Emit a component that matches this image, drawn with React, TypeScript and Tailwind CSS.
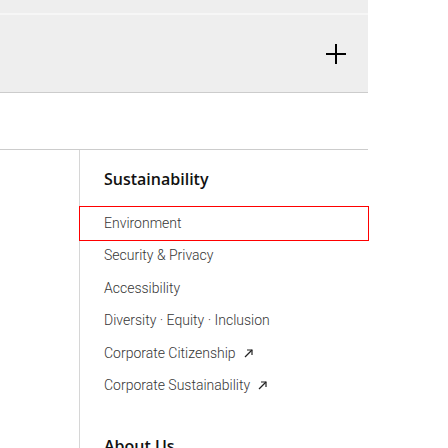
import React from "react";

type NavLink = { label: string; external?: boolean; focused?: boolean };

const links: NavLink[] = [
  { label: "Environment", focused: true },
  { label: "Security & Privacy" },
  { label: "Accessibility" },
  { label: "Diversity · Equity · Inclusion" },
  { label: "Corporate Citizenship", external: true },
  { label: "Corporate Sustainability", external: true },
];

function ArrowUpRight() {
  return (
    <svg width="9" height="9" viewBox="0 0 9 9" className="ml-2 inline-block" fill="none" stroke="#222" strokeWidth="1.2">
      <path d="M1 8 L8 1" />
      <path d="M3 1 H8 V6" />
    </svg>
  );
}

function PlusIcon() {
  return (
    <svg width="20" height="20" viewBox="0 0 20 20" stroke="#000" strokeWidth="2">
      <path d="M0 10 H20" />
      <path d="M10 0 V20" />
    </svg>
  );
}

export default function App() {
  return (
    <div className="h-[448px] w-[448px] overflow-hidden bg-white" style={{ fontFamily: "Roboto, 'Open Sans', sans-serif" }}>
      <div className="w-[368px]">
        <div className="h-[15px] border-b-2 border-[#f6f6f6] bg-[#eeeeee]" />
        <button className="flex h-[78px] w-full items-center justify-end border-b border-[#cccccc] bg-[#eeeeee] pr-[22px]">
          <PlusIcon />
        </button>

        <div className="mt-[56px] border-t border-[#cccccc] pl-[79px]">
          <div className="border-l border-[#d6d6d6] pt-[17px]">
            <h3 className="mb-[16px] pl-[24px] font-['Open_Sans',sans-serif] text-[16px] font-semibold leading-[24px] text-[#111]">Sustainability</h3>
            <ul>
              {links.map((l) => (
                <li key={l.label}>
                  <a
                    className={
                      "flex h-[32.5px] items-center pl-[24px] text-[14px] font-light text-[#363636] " +
                      (l.focused ? "outline outline-1 outline-[#ff0000]" : "")
                    }
                  >
                    {l.label}
                    {l.external && <ArrowUpRight />}
                  </a>
                </li>
              ))}
            </ul>
            <h3 className="mt-[32px] pl-[24px] font-['Open_Sans',sans-serif] text-[16px] font-semibold leading-[24px] text-[#111]">About Us</h3>
          </div>
        </div>
      </div>
    </div>
  );
}
